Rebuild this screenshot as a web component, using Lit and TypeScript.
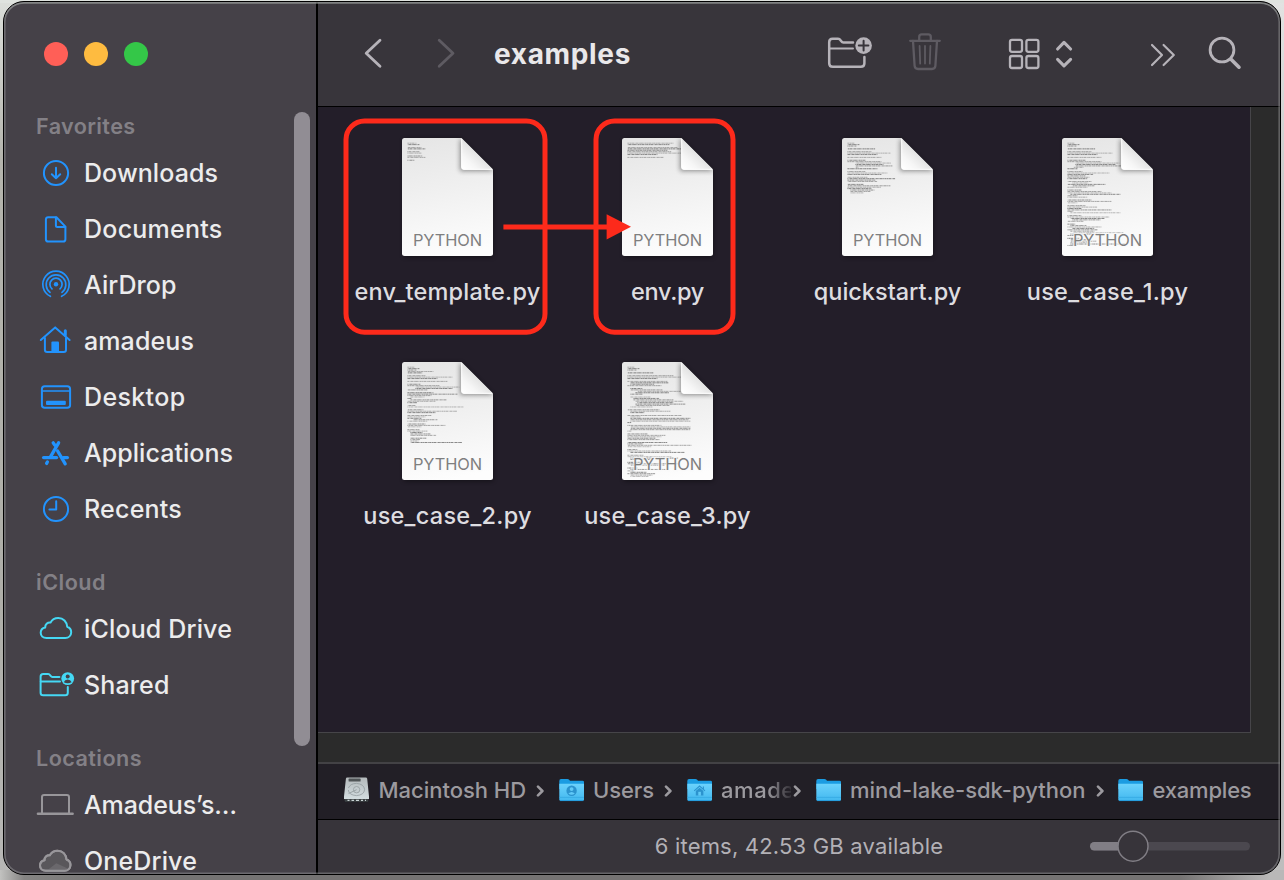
import { LitElement, html, css, svg } from "lit";
import { customElement, property } from "lit/decorators.js";

/* Text whose tracking is adjusted so that it spans a given advance width. */
@customElement("tracked-text")
class TrackedText extends LitElement {
  @property({ type: Number }) span = 0;
  @property() text = "";
  static styles = css`
    :host { display: inline-block; white-space: pre; }
  `;
  render() {
    return html`<span>${this.text}</span>`;
  }
  updated() {
    const el = this.renderRoot.querySelector("span") as HTMLElement;
    el.style.letterSpacing = "0px";
    const natural = el.getBoundingClientRect().width;
    if (this.span > 0) {
      el.style.letterSpacing = (this.span - natural) / this.text.length + "px";
    }
  }
}

const CLOUD =
  "M10.5 29C7 29 4.7 26.8 4.7 23.8C4.7 21 6.6 19 9.2 18.5C9 15.4 11.5 13.3 14.5 13.6C16 10.6 19 9 22.3 9C27.2 9 30.9 12.5 31.2 17.8C33.6 18.6 35.2 20.7 35.2 23.3C35.2 26.6 32.6 29 29.3 29Z";

const SIDE_ICONS: Record<string, unknown> = {
  downloads: svg`<circle cx="20" cy="20" r="12.1"/><path d="M20 14.8V25M15.8 21.2L20 25.3L24.2 21.2"/>`,
  documents: svg`<path d="M12.3 8.2H20.4L29.4 17.6V30.2Q29.4 32.6 27 32.6H12.3Q9.9 32.6 9.9 30.2V10.6Q9.9 8.2 12.3 8.2Z"/><path d="M19.9 8.4V16.4Q19.9 17.9 21.4 17.9H29.3"/>`,
  airdrop: svg`<g stroke-width="1.7"><path d="M14.4 31.3A13.2 13.2 0 1 1 25.6 31.3"/><path d="M14 27.4A9.8 9.8 0 1 1 26 27.4"/><path d="M16 23.9A6.1 6.1 0 1 1 24 23.9"/></g><circle cx="20" cy="19.3" r="2.2" fill="currentColor" stroke="none"/>`,
  home: svg`<path d="M4.8 19L19.2 6.4L33.6 19"/><path d="M8.9 17V28.7Q8.9 31 11.2 31H27.7Q30 31 30 28.7V17"/><path d="M29.3 9.8V14" stroke-width="3"/><path d="M15.4 31V21.6Q15.4 20.6 16.4 20.6H22Q23 20.6 23 21.6V31Z" fill="currentColor" stroke="none"/>`,
  desktop: svg`<rect x="5.9" y="9.2" width="28.2" height="21.6" rx="2.8"/><path d="M6 14H34" stroke-width="1.7"/><rect x="10" y="23.8" width="19.8" height="4.2" rx="1" fill="currentColor" stroke="none"/>`,
  applications: svg`<g stroke-width="3.3"><path d="M22.6 9.8L14.6 23.6"/><path d="M17.2 9.8L18.8 12.2"/><path d="M21.6 18L29.2 30.8"/><path d="M7.6 24.6H20.6"/><path d="M27.4 24.6H31.4"/><path d="M11.4 29L10.6 30.4"/></g>`,
  recents: svg`<circle cx="20" cy="20" r="12.1"/><path d="M20.2 12.2V20.6H13.4"/>`,
  cloud: svg`<path d=${CLOUD}/>`,
  shared: svg`<path d="M23.4 11.9H16.4C14.4 11.9 14.4 9.1 12.2 9.1H7.2Q4.6 9.1 4.6 11.7V27.7Q4.6 30.3 7.2 30.3H29.2Q31.8 30.3 31.8 27.7V22"/><path d="M4.8 16.4H24"/><circle cx="31.7" cy="13.6" r="6.4" fill="currentColor" stroke="none"/><g fill="#454148" stroke="none"><circle cx="31.7" cy="11.6" r="2"/><path d="M27.8 17.2Q28.8 14.6 31.7 14.6T35.6 17.2Q31.7 19.4 27.8 17.2Z"/></g>`,
  laptop: svg`<path d="M6 28V12Q6 9.9 8.1 9.9H30.9Q33 9.9 33 12V28"/><path d="M2 28.8H36.6" stroke-width="2.6"/>`,
  onedrive: svg`<g transform="translate(-.7 .7)"><path d=${CLOUD} fill="#59575b"/><path d="M12 28.6L21 21.6L33.6 27.2L30 28.8Z" fill="#6a686c" stroke="none"/><path d=${CLOUD}/></g>`,
};

const SECTIONS = [
  {
    title: "Favorites", span: 99.5, tone: "blue",
    rows: [
      ["downloads", "Downloads", 134], ["documents", "Documents", 138.5], ["airdrop", "AirDrop", 92.5],
      ["home", "amadeus", 110], ["desktop", "Desktop", 101.5], ["applications", "Applications", 149],
      ["recents", "Recents", 98],
    ],
  },
  {
    title: "iCloud", span: 70, tone: "cyan",
    rows: [["cloud", "iCloud Drive", 148], ["shared", "Shared", 85.5]],
  },
  {
    title: "Locations", span: 106, tone: "gray",
    rows: [["laptop", "Amadeus’s…", 153], ["onedrive", "OneDrive", 113]],
  },
] as const;

/* Source previews: one "indent:length" pair per line, "-" for a blank line. */
const FILES = [
  { name: "env_template.py", span: 186, code: "0:9 0:12 - 0:14 0:18 - 0:12 0:14 - 0:15 0:18 - 0:7" },
  { name: "env.py", span: 73, code: "0:46 0:42 - 0:50 0:54 0:40 0:44 0:54 0:30 - 0:36" },
  {
    name: "quickstart.py", span: 147.5,
    code: "0:7 0:12 0:9 - 0:28 - 0:24 0:43 0:30 - 0:34 - 0:18 0:34 8:36 8:28 8:37 8:3 0:30 - 0:18 0:40 0:34 - 0:20 0:48 0:28 0:30 - 0:16 0:43 0:34 0:24 3:24 3:20 3:13",
  },
  {
    name: "use_case_1.py", span: 161.5,
    code: "0:7 0:12 0:9 - 0:28 - 0:24 0:45 0:30 - 0:34 - 0:18 0:34 8:44 8:40 8:46 6:10 0:10 - 0:15 0:42 0:26 0:18 0:22 0:20 - 0:24 5:16 0:38 5:22 0:20 - 0:14 0:34 0:44 3:50 0:10 0:20 - 0:24 0:44 0:10 - 0:18 0:30 0:14 0:44 0:6 3:50 - 0:14 0:42 3:34 5:28 0:16 - 0:8 3:16 0:34 5:22 0:30 3:24 6:50 3:30 0:8 - 0:12 3:20 3:26 3:18 3:55 0:9",
  },
  {
    name: "use_case_2.py", span: 168.5,
    code: "0:7 0:12 0:9 0:26 0:15 - 0:18 0:45 0:30 - 0:40 - 0:13 0:32 8:44 8:37 0:20 - 0:26 0:50 0:24 3:14 0:4 3:36 0:28 0:10 - 0:8 0:56 - 0:16 0:50 0:28 - 0:24 0:18 0:14 6:24 0:20 - 0:18 0:38 0:14 - 0:12 0:20 3:12 3:20 3:26 - 3:16 3:10 3:8 3:52",
  },
  {
    name: "use_case_3.py", span: 166.5,
    code: "0:7 0:12 0:9 - 0:26 - 0:46 0:54 0:30 - 0:40 3:38 3:24 0:34 - 3:12 3:32 10:44 8:34 3:12 - 3:20 6:26 6:40 8:48 10:36 8:50 8:34 3:22 - 0:32 3:40 3:14 - 0:54 3:10 3:60 3:58 3:60 0:4 - 0:34 3:60 3:60 3:60 0:4 - 0:20 0:38 0:34 0:28 0:32 - 0:40 0:16 0:64 0:24 - 0:10 0:44 3:54 - 0:16 0:44 3:48 3:20 - 0:14 0:52 3:34 - 0:10 3:36 0:8 3:16 0:28 3:22 3:18",
  },
];

function codeLines(code: string) {
  return code.split(" ").map((part, i) => {
    if (part === "-") return null;
    const [indent, length] = part.split(":").map(Number);
    const y = 5.2 + i * 1.42;
    return svg`<line x1=${5.4 + indent} x2=${5.4 + indent + length} y1=${y} y2=${y}
      stroke-dashoffset=${(i * 7) % 13} opacity=${0.4 + ((i * 5) % 7) * 0.055}/>`;
  });
}

@customElement("python-file")
class PythonFile extends LitElement {
  @property() name = "";
  @property() code = "";
  @property({ type: Number }) span = 0;
  static styles = css`
    :host { display: flex; flex-direction: column; align-items: center; height: 224px; }
    .doc { display: block; width: 107px; height: 134px; margin-top: -4px; }
    .kind { font: 400 16.4px Inter, sans-serif; fill: #7f7f7f; paint-order: stroke; stroke: #fafafa; stroke-width: 2.4px; stroke-opacity: .75; }
    .name { margin-top: 9px; font: 480 23.5px/30px Inter, sans-serif; color: #dedde0; text-align: center; }
  `;
  render() {
    return html`
      <svg class="doc" viewBox="-8 -4 107 134">
        <defs>
          <linearGradient id="page" x1=".35" y1="0" x2=".5" y2="1">
            <stop offset="0" stop-color="#e6e6e6"/><stop offset=".45" stop-color="#f0f0f0"/><stop offset="1" stop-color="#fdfdfd"/>
          </linearGradient>
          <linearGradient id="curl" x1=".05" y1=".95" x2=".55" y2=".42">
            <stop offset="0" stop-color="#ffffff"/><stop offset=".4" stop-color="#f6f6f6"/><stop offset="1" stop-color="#dedede"/>
          </linearGradient>
          <filter id="soft" x="-50%" y="-50%" width="200%" height="200%"><feGaussianBlur stdDeviation="2.6"/></filter>
          <clipPath id="shape"><path d="M2.5 0H59.5L91 31.6V115.5Q91 118 88.5 118H2.5Q0 118 0 115.5V2.5Q0 0 2.5 0Z"/></clipPath>
        </defs>
        <path d="M2 1H59L91 33V119H2Z" fill="#000" opacity=".45" filter="url(#soft)"/>
        <g clip-path="url(#shape)">
          <rect width="91" height="118" fill="url(#page)"/>
          <g stroke="#4a4a4a" stroke-width=".9" stroke-dasharray="2.1 .4 1.3 .3 2.8 .5 .8 .4">${codeLines(this.code)}</g>
          <path d="M58 0V33H92Z" fill="#000" opacity=".42" filter="url(#soft)"/>
          <path d="M59.3 0V29Q59.3 31.8 62 31.8H92Z" fill="url(#curl)"/>
          <path d="M59.7 1V29Q59.7 31.3 62 31.3H90" fill="none" stroke="#fff" stroke-width="1"/>
        </g>
        <text class="kind" x="45.5" y="107.8" text-anchor="middle" textLength="69" lengthAdjust="spacing">PYTHON</text>
      </svg>
      <div class="name"><tracked-text .text=${this.name} .span=${this.span}></tracked-text></div>
    `;
  }
}

const disk = svg`
  <defs><linearGradient id="metal" x1="0" y1="0" x2="0" y2="1"><stop offset="0" stop-color="#b4babc"/><stop offset="1" stop-color="#d3dde0"/></linearGradient></defs>
  <path d="M3.2 .6H21.8Q23 .6 23.2 1.8L25 19.5V22H0V19.5L1.9 1.8Q2 .6 3.2 .6Z" fill="url(#metal)"/>
  <path d="M.4 22H24.6L24 24.8H1Z" fill="#3d4345"/>
  <path d="M3.5 23.4H5.5M7.5 23.4H10M12 23.4H15M17 23.4H19M21 23.4H22" stroke="#c9d2d4" stroke-width="1.3"/>
  <rect x="4.6" y="1.6" width="12" height="3" rx=".6" fill="#505557"/>
  <path d="M4.4 11Q6.4 6.4 12.5 6.4Q20 7 20.6 12.5Q20.2 18 12.5 18.6Q4.6 18 4.4 13" fill="none" stroke="#939c9f" stroke-width=".8"/>
  <circle cx="12.6" cy="12.7" r="3.2" fill="#c4cccf" stroke="#949da0" stroke-width=".8"/>
  <path d="M12.6 12.7L4.6 16.5" stroke="#9aa3a6" stroke-width="1"/>`;

const folder = (mark: unknown = null) => svg`
  <defs><linearGradient id="blue" x1="0" y1="0" x2="0" y2="1"><stop offset="0" stop-color="#6bd2fc"/><stop offset="1" stop-color="#42b8ef"/></linearGradient></defs>
  <path d="M.3 3.9Q.3 2 2 2H8.4Q9.5 2 10.2 2.8L11 3.7H23.6Q25 3.7 25 5.1V12H.3Z" fill="#1b9ce2"/>
  <path d="M.3 6.8H25V22.6Q25 24 23.6 24H1.7Q.3 24 .3 22.6Z" fill="url(#blue)"/>
  <path d="M.4 20.4H24.9" stroke="#35a9e3" stroke-width=".8"/>
  <path d="M1 23.6H24.3" stroke="#1c93d6" stroke-width=".8"/>${mark}`;

const userMark = svg`<circle cx="12.6" cy="13.8" r="5.2" fill="#2b93ce"/><circle cx="12.6" cy="12.1" r="1.9" fill="#60c9f7"/><path d="M9.4 16.6Q12.6 13.2 15.8 16.6Q12.6 19 9.4 16.6Z" fill="#60c9f7"/>`;
const homeMark = svg`<path d="M7.2 13.8L12.6 9L18 13.8M16.4 9.6V12" stroke="#2b93ce" stroke-width="1.1" fill="none"/><path d="M8.8 14L12.6 10.8L16.4 14V18.6H8.8Z" fill="#2b93ce"/><rect x="11.3" y="14.8" width="2.6" height="3.8" fill="#60c9f7"/>`;

const PATH = [
  { icon: disk, text: "Macintosh HD", span: 147.5, cls: "" },
  { icon: folder(userMark), text: "Users", span: 61, cls: "" },
  { icon: folder(homeMark), text: "amadeus", span: 100, cls: "faded" },
  { icon: folder(), text: "mind-lake-sdk-python", span: 235.5, cls: "" },
  { icon: folder(), text: "examples", span: 99, cls: "" },
];

@customElement("app-root")
class AppRoot extends LitElement {
  static styles = css`
    :host {
      display: block; box-sizing: border-box; width: 1284px; height: 880px; padding: 1px 3px 5px; overflow: hidden;
      font-family: Inter, "Liberation Sans", sans-serif;
      background:
        linear-gradient(to right, #c2c2c0 0, #858483 24px, #757373 120px, #757373 1180px, #b9b8b8 1270px) 0 870px / 100% 10px no-repeat,
        linear-gradient(#dfe3df, #dfe3df) 0 0 / 100% 3px no-repeat,
        linear-gradient(to bottom, #dcdfdb 0, #b4b4ad 160px, #aeaea8 600px, #b7b7b5 870px) 0 0 / 30px 100% no-repeat,
        linear-gradient(to bottom, #e2e3e2 0, #c9c9c9 200px, #bdbdbd 870px);
    }
    .window {
      position: relative; box-sizing: border-box; display: flex; width: 1278px; height: 874px;
      border: 1px solid #000; border-radius: 21px; overflow: hidden; background: #38353b;
    }
    .window::after {
      content: ""; position: absolute; inset: 0; border-radius: 20px; pointer-events: none;
      box-shadow: inset 0 0 0 1.6px rgba(150, 150, 152, .5), inset 0 1.8px 0 rgba(170, 182, 174, .45);
    }
    .sidebar { position: relative; box-sizing: border-box; width: 314px; flex: none; background: #454148; border-right: 2px solid #000; overflow: hidden; }
    .lights { display: flex; gap: 16px; height: 24px; padding: 40px 0 15px 40px; }
    .light { width: 24px; height: 24px; border-radius: 50%; }
    .red { background: #ff5f57; }
    .amber { background: #febb40; }
    .green { background: #34c748; }
    .heading { height: 38px; padding: 26px 0 0 32px; font-size: 21.6px; font-weight: 600; line-height: 38px; color: #838086; }
    .row { display: flex; align-items: center; gap: 8px; height: 56px; padding-left: 32px; font-size: 25px; font-weight: 490; color: #ececed; }
    .row svg { width: 40px; height: 40px; flex: none; fill: none; stroke: currentColor; stroke-width: 2; stroke-linecap: round; stroke-linejoin: round; overflow: visible; }
    .blue svg { color: #2293fd; }
    .cyan svg { color: #45d8f4; }
    .gray svg { color: #98969a; }
    .thumb { position: absolute; left: 290px; top: 110px; width: 16px; height: 634px; border-radius: 8px; background: #918d94; }

    .main { display: flex; flex-direction: column; flex: 1; min-width: 0; }
    .toolbar { display: flex; align-items: center; height: 104px; border-bottom: 1px solid #000; padding-left: 42px; color: #b6b3b9; }
    .toolbar svg { display: block; flex: none; height: 48px; fill: none; stroke: currentColor; stroke-linecap: round; stroke-linejoin: round; }
    .toolbar .dim { color: #5e5b62; }
    .back, .forward { width: 26px; }
    .forward { margin-left: 47px; }
    .title { width: 332px; margin-left: 35px; font-size: 28px; font-weight: 700; color: #e9e8ea; }
    .newfolder { width: 48px; }
    .trash { width: 36px; margin-left: 33px; }
    .grid { width: 36px; margin-left: 64px; }
    .sort { width: 20px; margin-left: 12px; }
    .more { width: 28px; margin-left: 75px; }
    .search { width: 36px; margin-left: 29px; }

    .gutter { height: 655px; background: #2b2b2b; }
    .pane {
      position: relative; box-sizing: border-box; width: 933px; height: 626px; background: #231e29;
      border: solid #464549; border-width: 0 1px 1px 0;
      display: grid; grid-template-columns: repeat(4, 220px); grid-auto-rows: 224px; align-content: start; padding: 31px 0 0 19.5px;
    }
    .marks { position: absolute; left: 0; top: 0; width: 440px; height: 240px; fill: none; stroke: #fd2a1b; stroke-width: 5; }

    .pathbar { display: flex; align-items: center; height: 55px; box-sizing: border-box; padding: 0 0 3px 26px; background: #221f26; font-size: 22px; font-weight: 460; color: #9c9a9f; }
    .edge { height: 2px; background: #434245; }
    .crumb { display: flex; align-items: center; }
    .crumb svg { width: 26px; height: 26px; flex: none; margin-right: 8.5px; }
    .faded { width: 70px; overflow: hidden; white-space: nowrap; -webkit-mask-image: linear-gradient(to right, #000 46px, transparent 74px); mask-image: linear-gradient(to right, #000 46px, transparent 74px); }
    .sep { width: 8px; height: 14px; flex: none; margin: 2px 14.5px 0 10px; fill: none; stroke: #9c9a9f; stroke-width: 2.6; stroke-linecap: round; stroke-linejoin: round; }
    .sep.tight { margin-left: 2px; }
    .status { flex: 1; display: grid; grid-template-columns: 1fr auto 1fr; align-items: center; border-top: 1px solid #000; background: #37343a; font-size: 22px; font-weight: 430; color: #b3b1b6; padding-bottom: 2px; }
    .count { grid-column: 2; }
    .slider { justify-self: end; width: 164px; height: 34px; margin-right: 28px; }
  `;

  render() {
    return html`
      <div class="window">
        <aside class="sidebar">
          <div class="lights"><div class="light red"></div><div class="light amber"></div><div class="light green"></div></div>
          ${SECTIONS.map(
            (s) => html`<section class=${s.tone}>
              <div class="heading"><tracked-text .text=${s.title} .span=${s.span}></tracked-text></div>
              ${s.rows.map(
                ([icon, text, span]) => html`<div class="row">
                  <svg viewBox="0 0 40 40">${SIDE_ICONS[icon]}</svg>
                  <tracked-text .text=${text} .span=${span}></tracked-text>
                </div>`
              )}
            </section>`
          )}
          <div class="thumb"></div>
        </aside>
        <div class="main">
          <header class="toolbar">
            <svg class="back" viewBox="360 30 26 48" stroke-width="2.8"><path d="M380 40.2L366.2 53.2L380 66.2"/></svg>
            <svg class="forward dim" viewBox="433 30 26 48" stroke-width="2.8"><path d="M439.2 40.2L453 53.2L439.2 66.2"/></svg>
            <div class="title"><tracked-text .text=${"examples"} .span=${137}></tracked-text></div>
            <svg class="newfolder" viewBox="826 30 48 48" stroke-width="2.5">
              <path d="M853 42.4H843.4C840.8 42.4 841 38.8 838 38.8H832.6Q829.2 38.8 829.2 42.2V63.2Q829.2 66.8 832.8 66.8H860.8Q864.4 66.8 864.4 63.2V57"/>
              <path d="M829.4 48.6H853" stroke-width="2"/>
              <circle cx="863.6" cy="45.6" r="8.3" fill="currentColor" stroke="none"/>
              <path d="M863.6 40.8V50.4M858.8 45.6H868.4" stroke="#38353b" stroke-width="2"/>
            </svg>
            <svg class="trash dim" viewBox="907 30 36 48" stroke-width="2.3">
              <path d="M910.2 40.8H939.8M919.2 40.4V37Q919.2 34.4 921.8 34.4H928.2Q930.8 34.4 930.8 37V40.4"/>
              <path d="M913 41L914.6 65.8Q914.8 69 918 69H932Q935.2 69 935.4 65.8L937 41"/>
              <path d="M919.6 46L920.2 63.6M925 46V63.6M930.4 46L929.8 63.6" stroke-width="1.8"/>
            </svg>
            <svg class="grid" viewBox="1007 30 36 48" stroke-width="2.3">
              <rect x="1010" y="39.8" width="12" height="12" rx="2"/><rect x="1026.4" y="39.8" width="12" height="12" rx="2"/>
              <rect x="1010" y="56" width="12" height="12" rx="2"/><rect x="1026.4" y="56" width="12" height="12" rx="2"/>
            </svg>
            <svg class="sort" viewBox="1055 30 20 48" stroke-width="3.1"><path d="M1057.6 49L1064 42.4L1070.6 49M1057.6 59.4L1064 65.8L1070.6 59.4"/></svg>
            <svg class="more" viewBox="1150 30 28 48" stroke-width="2.2"><path d="M1152 45L1162 55L1152 65M1163.6 45L1173.8 55L1163.6 65"/></svg>
            <svg class="search" viewBox="1207 30 36 48" stroke-width="2.8"><circle cx="1222" cy="50" r="11.9"/><path d="M1231 59.2L1239 67.2" stroke-width="3.6"/></svg>
          </header>
          <div class="gutter">
            <div class="pane">
              ${FILES.map((f) => html`<python-file .name=${f.name} .code=${f.code} .span=${f.span}></python-file>`)}
              <svg class="marks" viewBox="318 107 440 240">
                <rect x="346" y="121" width="199" height="211.2" rx="18.5"/>
                <rect x="596" y="121" width="137" height="211.2" rx="18.5"/>
                <path d="M503.4 227H608"/>
                <path d="M606.6 214.2L631 226.8L606.6 239.4Z" fill="#fd2a1b" stroke="none"/>
              </svg>
            </div>
          </div>
          <div class="edge"></div>
          <nav class="pathbar">
            ${PATH.map(
              (p, i) => html`<div class="crumb">
                  <svg viewBox="0 0 26 26">${p.icon}</svg>
                  <div class=${p.cls}><tracked-text .text=${p.text} .span=${p.span}></tracked-text></div>
                </div>
                ${i < PATH.length - 1
                  ? html`<svg class=${p.cls ? "sep tight" : "sep"} viewBox="0 0 8 14"><path d="M2 2.6L6.4 7L2 11.4"/></svg>`
                  : null}`
            )}
          </nav>
          <footer class="status">
            <div class="count"><tracked-text .text=${"6 items, 42.53 GB available"} .span=${288.5}></tracked-text></div>
            <svg class="slider" viewBox="1088 829 164 34">
              <rect x="1090" y="842" width="160" height="8.4" rx="4.2" fill="#4b484f"/>
              <rect x="1090" y="842" width="40" height="8.4" rx="4.2" fill="#817e85"/>
              <circle cx="1133" cy="846.2" r="15" fill="#37343a" stroke="#817e85" stroke-width="1.5"/>
            </svg>
          </footer>
        </div>
      </div>
    `;
  }
}
